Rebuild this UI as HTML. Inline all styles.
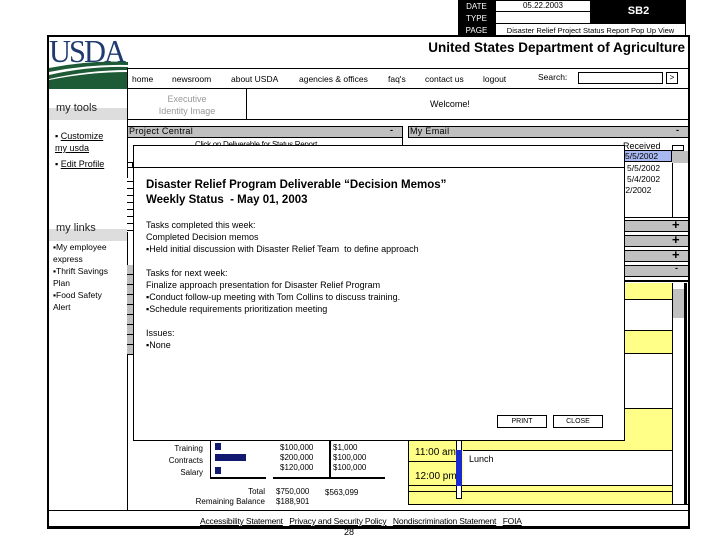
<!DOCTYPE html>
<html><head><meta charset="utf-8"><style>
*{margin:0;padding:0;box-sizing:border-box}
body{width:720px;height:540px;background:#fff;position:relative;overflow:hidden;font-family:"Liberation Sans",Arial,sans-serif;color:#000}
.a{position:absolute}
.t{position:absolute;white-space:nowrap;font-size:9px;line-height:11px}
.bar{position:absolute;background:#c0c0c0;border:1px solid #000}
.u{text-decoration:underline}
.y{position:absolute;background:#ffff88}
</style></head><body>
<!-- header table -->
<div class="a" style="left:458px;top:0;width:37px;height:36px;background:#000"></div>
<div class="t" style="left:460px;top:1px;width:33px;text-align:center;color:#fff;font-size:8px">DATE</div>
<div class="t" style="left:460px;top:13px;width:33px;text-align:center;color:#fff;font-size:8px">TYPE</div>
<div class="t" style="left:460px;top:25px;width:33px;text-align:center;color:#fff;font-size:8px">PAGE</div>
<div class="a" style="left:495px;top:0;width:96px;height:24px;border:1px solid #000"></div>
<div class="a" style="left:495px;top:11px;width:96px;height:1px;background:#000"></div>
<div class="t" style="left:495px;top:0;width:96px;text-align:center;font-size:8px">05.22.2003</div>
<div class="a" style="left:591px;top:0;width:95px;height:24px;background:#000"></div>
<div class="t" style="left:591px;top:6px;width:95px;text-align:center;color:#fff;font-weight:bold;font-size:11px">SB2</div>
<div class="a" style="left:495px;top:23px;width:191px;height:13px;border:1px solid #000"></div>
<div class="t" style="left:495px;top:25px;width:191px;text-align:center;font-size:7.5px">Disaster Relief Project Status Report Pop Up View</div>

<!-- main frame -->
<div class="a" style="left:47px;top:35px;width:643px;height:494px;border:2px solid #000;border-bottom-width:3px"></div>
<!-- logo -->
<div class="t" style="left:49px;top:34px;font-family:'Liberation Serif',serif;font-size:32px;line-height:34px;color:#1f3a6e;letter-spacing:-2px;transform:scaleX(0.95);transform-origin:left">USDA</div>
<svg class="a" style="left:49px;top:60px" width="79" height="29"><path d="M0 8 Q40 0 79 2 L79 5 Q40 4 0 12Z" fill="#1d5a36"/><path d="M0 15 Q40 6 79 7 L79 10 Q40 10 0 19Z" fill="#1d5a36"/><path d="M0 20 Q40 12 79 12 L79 29 L0 29Z" fill="#1d5a36"/></svg>
<div class="t" style="left:380px;top:40px;width:305px;text-align:right;font-size:13.5px;line-height:16px;font-weight:bold">United States Department of Agriculture</div>
<!-- nav -->
<div class="a" style="left:127px;top:68px;width:561px;height:1px;background:#000"></div>
<div class="a" style="left:127px;top:88px;width:561px;height:1px;background:#000"></div>
<div class="t" style="left:132px;top:74px;font-size:8.5px">home</div>
<div class="t" style="left:172px;top:74px;font-size:8.5px">newsroom</div>
<div class="t" style="left:231px;top:74px;font-size:8.5px">about USDA</div>
<div class="t" style="left:299px;top:74px;font-size:8.5px">agencies &amp; offices</div>
<div class="t" style="left:388px;top:74px;font-size:8.5px">faq's</div>
<div class="t" style="left:425px;top:74px;font-size:8.5px">contact us</div>
<div class="t" style="left:483px;top:74px;font-size:8.5px">logout</div>
<div class="t" style="left:538px;top:72px;font-size:8.5px">Search:</div>
<div class="a" style="left:578px;top:72px;width:85px;height:12px;border:1px solid #000"></div>
<div class="a" style="left:666px;top:72px;width:12px;height:12px;border:1px solid #000;font-size:8px;line-height:10px;text-align:center">&gt;</div>
<!-- identity row -->
<div class="a" style="left:127px;top:68px;width:1px;height:443px;background:#000"></div>
<div class="a" style="left:246px;top:89px;width:1px;height:30px;background:#000"></div>
<div class="a" style="left:127px;top:119px;width:561px;height:1px;background:#000"></div>
<div class="t" style="left:128px;top:93px;width:118px;text-align:center;color:#999;font-size:9px;line-height:12px">Executive<br>Identity Image</div>
<div class="t" style="left:430px;top:99px;font-size:9px">Welcome!</div>
<!-- left column -->
<div class="a" style="left:49px;top:108px;width:78px;height:12px;background:#ddd"></div>
<div class="t" style="left:56px;top:101px;font-size:11px;line-height:14px;color:#222">my tools</div>
<div class="t" style="left:55px;top:130px;font-size:9px;line-height:12px">▪ <span class="u">Customize</span><br><span class="u">my usda</span></div>
<div class="t" style="left:55px;top:159px;font-size:9px">▪ <span class="u">Edit Profile</span></div>
<div class="a" style="left:49px;top:229px;width:78px;height:12px;background:#ddd"></div>
<div class="t" style="left:56px;top:221px;font-size:11px;line-height:14px;color:#222">my links</div>
<div class="t" style="left:53px;top:241px;font-size:8.5px;line-height:12px">▪My employee<br>express<br>▪Thrift Savings<br>Plan<br>▪Food Safety<br>Alert</div>
<!-- project central -->
<div class="bar" style="left:127px;top:126px;width:276px;height:12px"></div>
<div class="t" style="left:129px;top:126px;font-size:9px;letter-spacing:.3px">Project Central</div>
<div class="t" style="left:390px;top:125px;font-weight:bold">-</div>
<div class="a" style="left:127px;top:138px;width:1px;height:300px;background:#000"></div>
<div class="a" style="left:402px;top:138px;width:1px;height:10px;background:#000"></div>
<div class="t" style="left:195px;top:139px;font-size:8px;letter-spacing:-.3px">Click on Deliverable for Status Report</div>
<div class="a" style="left:127px;top:162px;width:6px;height:6px;border:1px solid #000"></div>
<div class="a" style="left:127px;top:178px;width:6px;height:54px;background:repeating-linear-gradient(#fff 0 3px,#000 3px 4px,#fff 4px 7px)"></div>
<div class="a" style="left:127px;top:265px;width:6px;height:90px;background:repeating-linear-gradient(#c0c0c0 0 9px,#000 9px 10px)"></div>
<!-- my email -->
<div class="bar" style="left:408px;top:126px;width:281px;height:12px"></div>
<div class="t" style="left:410px;top:126px;font-size:9px;letter-spacing:.3px">My Email</div>
<div class="t" style="left:676px;top:125px;font-weight:bold">-</div>
<div class="t" style="left:623px;top:141px;font-size:9px">Received</div>
<div class="a" style="left:624px;top:150px;width:48px;height:12px;background:#a8b8f0;border:1px solid #000"></div>
<div class="t" style="left:625px;top:151px;font-size:8.5px">5/5/2002</div>
<div class="t" style="left:627px;top:163px;font-size:8.5px">5/5/2002</div>
<div class="t" style="left:627px;top:174px;font-size:8.5px">5/4/2002</div>
<div class="t" style="left:623px;top:185px;font-size:8.5px">/2/2002</div>
<div class="a" style="left:672px;top:145px;width:1px;height:72px;background:#000"></div>
<div class="a" style="left:672px;top:145px;width:12px;height:6px;border:1px solid #000"></div>
<div class="a" style="left:672px;top:151px;width:16px;height:12px;background:#c0c0c0"></div>
<div class="a" style="left:623px;top:217px;width:66px;height:1px;background:#000"></div>
<div class="bar" style="left:623px;top:220px;width:66px;height:12px"></div><div class="t" style="left:672px;top:219px;font-weight:bold;font-size:13px">+</div>
<div class="bar" style="left:623px;top:235px;width:66px;height:12px"></div><div class="t" style="left:672px;top:234px;font-weight:bold;font-size:13px">+</div>
<div class="bar" style="left:623px;top:250px;width:66px;height:12px"></div><div class="t" style="left:672px;top:249px;font-weight:bold;font-size:13px">+</div>
<div class="bar" style="left:623px;top:265px;width:66px;height:12px"></div><div class="t" style="left:675px;top:263px;font-weight:bold">-</div>
<div class="a" style="left:623px;top:280px;width:66px;height:2px;background:#000"></div>
<!-- calendar -->
<div class="y" style="left:623px;top:283px;width:49px;height:17px;border-bottom:1px solid #000"></div>
<div class="y" style="left:623px;top:330px;width:49px;height:24px;border-top:1px solid #000;border-bottom:1px solid #000"></div>
<div class="y" style="left:623px;top:408px;width:49px;height:32px;border-top:1px solid #000"></div>
<div class="a" style="left:672px;top:283px;width:1px;height:222px;background:#000"></div>
<div class="a" style="left:673px;top:289px;width:11px;height:29px;background:#c0c0c0"></div>
<div class="a" style="left:684px;top:283px;width:3px;height:222px;background:#000"></div>
<div class="y" style="left:408px;top:440px;width:264px;height:64px"></div>
<div class="a" style="left:408px;top:440px;width:1px;height:64px;background:#000"></div>
<div class="a" style="left:409px;top:461px;width:47px;height:1px;background:#000"></div>
<div class="a" style="left:408px;top:485px;width:264px;height:1px;background:#000"></div>
<div class="a" style="left:408px;top:491px;width:264px;height:1px;background:#000"></div>
<div class="a" style="left:463px;top:450px;width:209px;height:35px;background:#fff;border-top:1px solid #000"></div>
<div class="a" style="left:456px;top:440px;width:6px;height:59px;border:1px solid #000;background:#fff"></div>
<div class="a" style="left:456px;top:450px;width:6px;height:36px;background:#1a2ad0"></div>
<div class="t" style="left:415px;top:447px;font-size:10px">11:00 am</div>
<div class="t" style="left:415px;top:471px;font-size:10px">12:00 pm</div>
<div class="t" style="left:469px;top:454px;font-size:9px">Lunch</div>
<div class="a" style="left:408px;top:504px;width:280px;height:1px;background:#000"></div>
<!-- budget -->
<div class="t" style="left:140px;top:443px;width:63px;text-align:right;font-size:8px">Training</div>
<div class="t" style="left:140px;top:455px;width:63px;text-align:right;font-size:8px">Contracts</div>
<div class="t" style="left:140px;top:467px;width:63px;text-align:right;font-size:8px">Salary</div>
<div class="a" style="left:210px;top:438px;width:1px;height:40px;background:#000"></div>
<div class="a" style="left:215px;top:443px;width:6px;height:7px;background:#111a70"></div>
<div class="a" style="left:215px;top:454px;width:31px;height:7px;background:#111a70"></div>
<div class="a" style="left:215px;top:467px;width:6px;height:7px;background:#111a70"></div>
<div class="a" style="left:210px;top:477px;width:56px;height:2px;background:#000"></div>
<div class="a" style="left:273px;top:477px;width:112px;height:2px;background:#000"></div>
<div class="a" style="left:329px;top:438px;width:2px;height:40px;background:#000"></div>
<div class="t" style="left:280px;top:443px;font-size:8px;line-height:10px">$100,000<br>$200,000<br>$120,000</div>
<div class="t" style="left:333px;top:443px;font-size:8px;line-height:10px">$1,000<br>$100,000<br>$100,000</div>
<div class="t" style="left:180px;top:487px;width:85px;text-align:right;font-size:8px;line-height:10px">Total<br>Remaining Balance</div>
<div class="t" style="left:276px;top:487px;font-size:8px;line-height:10px">$750,000<br>$188,901</div>
<div class="t" style="left:325px;top:487px;font-size:8px">$563,099</div>
<!-- footer -->
<div class="a" style="left:49px;top:510px;width:640px;height:1px;background:#000"></div>
<div class="t" style="left:200px;top:516px;font-size:8.5px;letter-spacing:-.2px"><span class="u">Accessibility Statement</span>&nbsp;&nbsp; <span class="u">Privacy and Security Policy</span>&nbsp;&nbsp; <span class="u">Nondiscrimination Statement</span>&nbsp;&nbsp; <span class="u">FOIA</span></div>
<div class="t" style="left:344px;top:527px;font-size:9px">28</div>
<!-- popup -->
<div class="a" style="left:133px;top:145px;width:492px;height:296px;background:#fff;border:1px solid #000"></div>
<div class="a" style="left:134px;top:167px;width:490px;height:1px;background:#000"></div>
<div class="t" style="left:146px;top:178px;font-size:11.5px;line-height:15px;font-weight:bold">Disaster Relief Program Deliverable “Decision Memos”<br>Weekly Status&nbsp; - May 01, 2003</div>
<div class="t" style="left:146px;top:219px;font-size:9px;line-height:12px">Tasks completed this week:<br>Completed Decision memos<br>▪Held initial discussion with Disaster Relief Team&nbsp; to define approach</div>
<div class="t" style="left:146px;top:267px;font-size:9px;line-height:12px">Tasks for next week:<br>Finalize approach presentation for Disaster Relief Program<br>▪Conduct follow-up meeting with Tom Collins to discuss training.<br>▪Schedule requirements prioritization meeting</div>
<div class="t" style="left:146px;top:327px;font-size:9px;line-height:12px">Issues:<br>▪None</div>
<div class="a" style="left:497px;top:415px;width:50px;height:13px;border:1px solid #000;font-size:7px;line-height:11px;text-align:center">PRINT</div>
<div class="a" style="left:553px;top:415px;width:50px;height:13px;border:1px solid #000;font-size:7px;line-height:11px;text-align:center">CLOSE</div>
</body></html>
